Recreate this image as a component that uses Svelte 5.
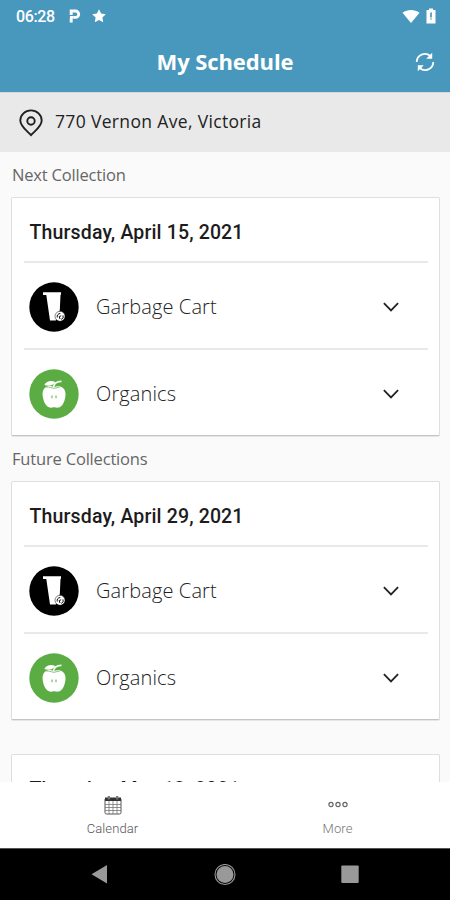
<script lang="ts">
  type Kind = 'garbage' | 'organics';
  type Service = { kind: Kind; label: string };

  const services: Service[] = [
    { kind: 'garbage', label: 'Garbage Cart' },
    { kind: 'organics', label: 'Organics' },
  ];

  const next = { date: 'Thursday, April 15, 2021', services };
  const future = [
    { date: 'Thursday, April 29, 2021', services },
    { date: 'Thursday, May 13, 2021', services: [] as Service[] },
  ];
</script>

{#snippet card(date: string, items: Service[])}
  <article class="card">
    <h3>{date}</h3>
    {#each items as service}
      <div class="service">
        {#if service.kind === 'garbage'}
          <svg class="badge" viewBox="0 0 50 50">
            <circle cx="25" cy="25" r="24.7" fill="#000" />
            <path d="M14 10.2h18v2.6h-.5l-.7 15.500-4 10.300h-5.800L17.300 13H14z" fill="#fff" />
            <circle cx="31" cy="34.300" r="5" fill="#fff" stroke="#000" stroke-width=".5" />
            <path d="M28.300 35.500a3 3 0 0 1 3-4M34 33.400a3 3 0 0 1-1.800 4M31 37l-.8-2.500 2-.7" fill="none" stroke="#111" stroke-width="1" />
          </svg>
        {:else}
          <svg class="badge" viewBox="0 0 50 50">
            <circle cx="25" cy="25" r="24.700" fill="#5bad43" />
            <path
              d="M25 18.200c-3-1.700-6.500-1.500-9 .6-2.400 2.100-2.800 5.400-2.200 9 .8 5 3.200 10 7 10.800 1.700.4 2.700-.4 4.300-.4s2.700.8 4.400.4c3.800-.9 6-5.700 6.800-10.700.6-3.600.2-6.800-2.300-9-2.400-2-6-2.400-9-.7z"
              fill="#fff"
            />
            <path d="M15.300 16c2-3.700 6.500-5 11-3-2 3.500-6.500 4.800-11 3z" fill="#fff" />
            <path d="M24.500 18c.5-3.500 4-5.500 8-5.600" fill="none" stroke="#fff" stroke-width="1.700" />
            <path d="M17.500 18.300c2.500-.8 5 .8 7.200 1 2.600-.2 4-1.200 6-1" fill="none" stroke="#5bad43" stroke-width=".7" />
            <path d="M23 26.500v2.700M27 26.500v2.700" fill="none" stroke="#5bad43" stroke-width="1" />
          </svg>
        {/if}
        <span class="label">{service.label}</span>
        <svg class="chevron" viewBox="0 0 18 12">
          <path d="M1.900 2.200 9 9.400l7.100-7.200" fill="none" stroke="#222" stroke-width="1.800" />
        </svg>
      </div>
    {/each}
  </article>
{/snippet}

<div class="screen">
  <header>
    <div class="status">
      <span class="time">06:28</span>
      <svg class="parking" viewBox="0 0 12 14">
        <path d="M2.200 13.500V9M2.200 6V2h4.300a3.200 3.200 0 0 1 0 6.400H4.800" fill="none" stroke="#fff" stroke-width="2.900" />
        <path d="M1 8.300h3.800" stroke="#fff" stroke-width="2.600" />
      </svg>
      <svg class="star" viewBox="0 0 14 14">
        <path d="M7 .3l2.100 4.300 4.700.6-3.400 3.300.8 4.800L7 11l-4.200 2.300.8-4.800L.2 5.200l4.700-.6z" fill="#fff" />
      </svg>
      <svg class="wifi" viewBox="0 0 18 15">
        <path d="M.5 3.800C5.500.2 12.500.2 17.500 3.800L9 14z" fill="#fff" />
      </svg>
      <svg class="battery" viewBox="0 0 10 16">
        <path d="M3 .5h4V2h2.500v13.500H.5V2H3z" fill="#fff" />
        <path d="M5 4.500v5M5 10.400v1.200" fill="none" stroke="#4898bd" stroke-width="1.700" />
      </svg>
    </div>
    <div class="titlebar">
      <h1>My Schedule</h1>
      <svg class="refresh" viewBox="0 0 20 20">
        <path d="M1.700 10A8.200 8.200 0 0 1 15.300 4M18.300 10A8.200 8.200 0 0 1 4.700 16" fill="none" stroke="#fff" stroke-width="1.800" />
        <path d="M17.200.7v6.100h-6zM2.800 19.300v-6.100h6z" fill="#fff" />
      </svg>
    </div>
  </header>

  <div class="address">
    <svg class="pin" viewBox="0 0 24 28">
      <path d="M12 26.200C8.500 22.300 1.300 17.500 1.300 11.500a10.700 10.100 0 0 1 21.400 0c0 6-7.200 10.800-10.700 14.700z" fill="none" stroke="#202020" stroke-width="1.900" />
      <circle cx="12" cy="12" r="3.700" fill="none" stroke="#202020" stroke-width="1.900" />
    </svg>
    <span>770 Vernon Ave, Victoria</span>
  </div>

  <main>
    <h2>Next Collection</h2>
    {@render card(next.date, next.services)}
    <h2>Future Collections</h2>
    {#each future as day}
      {@render card(day.date, day.services)}
    {/each}
  </main>

  <nav class="tabs">
    <div class="tab">
      <svg class="calendar" viewBox="0 0 18 20">
        <path d="M1 4h16v13.500a1.500 1.500 0 0 1-1.500 1.500h-13A1.500 1.500 0 0 1 1 17.500z" fill="#fff" stroke="#555" />
        <path d="M1 2.500h16V6H1z" fill="#333" />
        <path d="M4.800 1v3.500M13.200 1v3.500" stroke="#777" stroke-width="2.200" />
        <path d="M1 9.500h16M1 12.500h16M1 15.500h16M5 6v13M9 6v13M13 6v13" fill="none" stroke="#777" stroke-width=".8" />
      </svg>
      <span>Calendar</span>
    </div>
    <div class="tab more">
      <svg class="dots" viewBox="0 0 20 20">
        <g fill="none" stroke="#666" stroke-width="1.200">
          <circle cx="3" cy="9.500" r="2.100" />
          <circle cx="10" cy="9.500" r="2.100" />
          <circle cx="17" cy="9.500" r="2.100" />
        </g>
      </svg>
      <span>More</span>
    </div>
  </nav>

  <div class="system">
    <svg viewBox="0 0 22 22"><path d="M2.500 10.200 18 1v18.400z" fill="#999" /></svg>
    <svg viewBox="0 0 22 22">
      <circle cx="11" cy="10.500" r="10" fill="none" stroke="#999" stroke-width="1.100" />
      <circle cx="11" cy="10.500" r="8.500" fill="#999" />
    </svg>
    <svg viewBox="0 0 22 22"><rect x="2.300" y="1.500" width="17.400" height="17.400" rx="1" fill="#999" /></svg>
  </div>
</div>

<style>
  :global(body) { margin: 0; }
  .screen {
    display: flex;
    flex-direction: column;
    width: 450px;
    height: 900px;
    overflow: hidden;
    background: #fafafa;
    font-family: 'Open Sans', sans-serif;
  }
  svg { display: block; flex: none; }
  h1, h2, h3 { margin: 0; }
  header {
    flex: none;
    height: 92px;
    background: #4898bd;
    color: #fff;
  }
  .status {
    display: flex;
    align-items: center;
    height: 32px;
    padding: 0 14px 0 16px;
  }
  .time {
    width: 53px;
    font: 500 16px Roboto, sans-serif;
    letter-spacing: -0.4px;
  }
  .parking { width: 12px; height: 14px; }
  .star { width: 14px; height: 14px; margin-left: 11px; }
  .wifi { width: 18px; height: 15px; margin-left: auto; }
  .battery { width: 10px; height: 16px; margin-left: 6px; }
  .titlebar {
    display: grid;
    grid-template-columns: 1fr auto 1fr;
    align-items: center;
    height: 60px;
    padding: 0 15px;
  }
  h1 {
    grid-column: 2;
    padding-bottom: 2px;
    font-size: 22px;
    font-weight: 700;
    letter-spacing: -0.1px;
    line-height: 58px;
  }
  .refresh { width: 20px; height: 20px; justify-self: end; }
  .address {
    display: flex;
    flex: none;
    align-items: center;
    gap: 12px;
    height: 60px;
    padding-left: 19px;
    box-sizing: border-box;
    border-top: 1px solid #d5dadd;
    background: #e9e9e9;
    color: #222;
    font-size: 17.5px;
    letter-spacing: 0.34px;
  }
  .address span { padding-bottom: 4px; }
  .pin { width: 24px; height: 28px; }
  main {
    flex: 1;
    min-height: 0;
    overflow: hidden;
    padding: 0 10px 0 11px;
  }
  h2 {
    height: 45px;
    padding-left: 1px;
    color: #666;
    font-size: 16.5px;
    font-weight: 400;
    letter-spacing: -0.18px;
    line-height: 46px;
  }
  .card {
    min-height: 239px;
    padding: 0 11px 0 12px;
    box-sizing: border-box;
    border: 1px solid #dedede;
    border-bottom-color: #c4c4c4;
    border-radius: 2px;
    background: #fff;
    box-shadow: 0 1px 0 #e6e6e6;
  }
  .card + .card { margin-top: 34px; }
  h3 {
    height: 63px;
    padding-left: 5.5px;
    color: #1c1c1c;
    font: 500 19.5px/70px Roboto, sans-serif;
    letter-spacing: 0.15px;
  }
  .service {
    display: flex;
    align-items: center;
    height: 87px;
    padding: 2px 28px 0 5px;
    box-sizing: border-box;
    border-top: 2px solid #e9e9e9;
  }
  .badge { width: 50px; height: 50px; }
  .label {
    flex: 1;
    margin-left: 17px;
    color: #222;
    font-size: 20px;
    font-weight: 300;
    letter-spacing: 0.12px;
  }
  .chevron { width: 18px; height: 12px; }
  .tabs {
    display: flex;
    flex: none;
    height: 66px;
    background: #fff;
  }
  .tab {
    display: flex;
    flex: 1;
    flex-direction: column;
    align-items: center;
    gap: 5px;
    padding-top: 13px;
    box-sizing: border-box;
    color: #555;
    font: 300 13px/18px Roboto, sans-serif;
    letter-spacing: 0.1px;
  }
  .calendar { width: 18px; height: 20px; }
  .dots { width: 20px; height: 20px; }
  .more { color: #777; }
  .system {
    display: flex;
    flex: none;
    align-items: center;
    justify-content: center;
    gap: 103px;
    height: 52px;
    box-sizing: border-box;
    border-top: 1px solid #555;
    background: #000;
  }
  .system svg { width: 22px; height: 22px; }
</style>
